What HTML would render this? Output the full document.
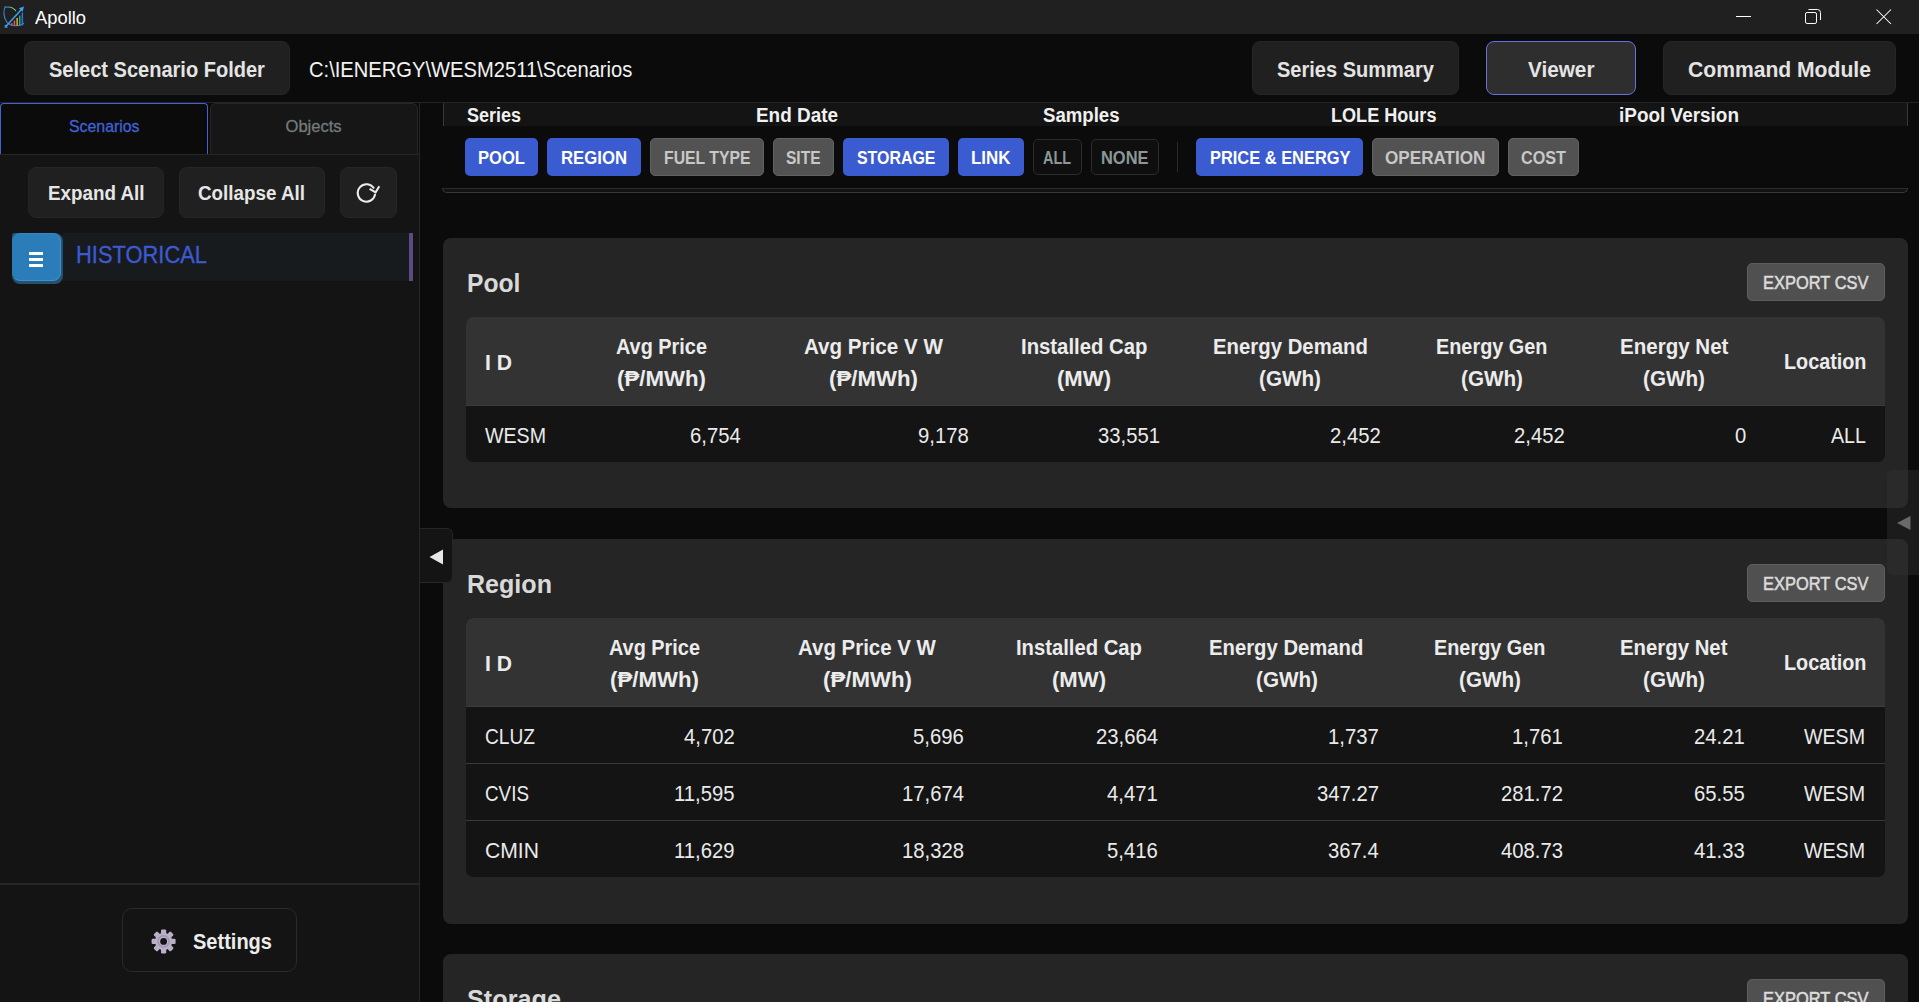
<!DOCTYPE html>
<html><head><meta charset="utf-8"><title>Apollo</title>
<style>
html,body{margin:0;padding:0;width:1919px;height:1002px;overflow:hidden;background:#0b0b0b;}
body{position:relative;font-family:"Liberation Sans",sans-serif;}
.a{position:absolute;box-sizing:border-box;}
.t{position:absolute;white-space:nowrap;transform-origin:0 0;}
svg{position:absolute;}
</style></head><body>
<div class="a" style="left:0px;top:0px;width:1919px;height:34px;background:#202020;"></div>
<svg style="left:0;top:0" width="30" height="34" viewBox="0 0 30 34">
<defs><linearGradient id="tg" x1="0" y1="0" x2="1" y2="0"><stop offset="0" stop-color="#3b8fd8"/><stop offset="1" stop-color="#7cd27a"/></linearGradient></defs>
<path d="M5.4 6.3 C3.2 10 3.4 17 6.5 21.5 C8.5 24.5 12 25.8 16 25.8 C19.5 25.8 22.5 24.8 24 23.2" fill="none" stroke="#3a8ad0" stroke-width="1.1"/>
<path d="M5.4 7.2 C9 6.6 13.5 7.5 16 11" fill="none" stroke="url(#tg)" stroke-width="1.1"/>
<rect x="11.2" y="23" width="1.4" height="2.6" fill="#e0458f"/>
<rect x="13.7" y="20.6" width="1.5" height="5" fill="#e8564a"/>
<rect x="16.4" y="18" width="1.5" height="7.6" fill="#f0a23c"/>
<rect x="19" y="15.6" width="1.5" height="10" fill="#1fae8c"/>
<rect x="21.6" y="12.5" width="1.5" height="13" fill="#2a78e0"/>
<path d="M5.6 26.8 L22.8 8" stroke="#3ea0f0" stroke-width="1.5"/>
<path d="M24 6.6 L18.8 8.2 L22.6 11.8 Z" fill="#3ea0f0"/>
<path d="M4.6 27.8 L5 24.6 L8 27.4 Z" fill="#3ea0f0"/>
</svg>
<div class="t" style="left:35.00px;top:9.00px;font-size:18.90px;line-height:18.90px;font-weight:400;color:#ffffff;transform:scaleX(0.9715);">Apollo</div>
<svg style="left:1730px;top:0" width="189" height="34" viewBox="0 0 189 34">
<path d="M6 16.5 H21" stroke="#fff" stroke-width="1"/>
<rect x="75.5" y="12.5" width="11" height="11" rx="1.6" fill="none" stroke="#fff" stroke-width="1"/>
<path d="M78.5 9.5 H87.5 Q90.5 9.5 90.5 12.5 V20" fill="none" stroke="#fff" stroke-width="1"/>
<path d="M146.5 9.5 L161 24 M161 9.5 L146.5 24" stroke="#fff" stroke-width="1.05"/>
</svg>
<div class="a" style="left:0px;top:34px;width:1919px;height:68px;background:#0b0b0b;"></div>
<div class="a" style="left:0px;top:102px;width:1919px;height:1px;background:#242424;"></div>
<div class="a" style="left:24px;top:41px;width:266px;height:54px;background:#202020;border:1px solid #262626;box-sizing:border-box;border-radius:8px;"></div>
<div class="t" style="left:49.00px;top:59.00px;font-size:22.53px;line-height:22.53px;font-weight:700;color:#e4e4e4;transform:scaleX(0.8893);">Select Scenario Folder</div>
<div class="t" style="left:308.50px;top:59.00px;font-size:22.53px;line-height:22.53px;font-weight:400;color:#f2f2f2;transform:scaleX(0.8951);">C:\IENERGY\WESM2511\Scenarios</div>
<div class="a" style="left:1252px;top:41px;width:207px;height:54px;background:#202020;border:1px solid #262626;box-sizing:border-box;border-radius:8px;"></div>
<div class="t" style="left:1277.00px;top:59.00px;font-size:22.53px;line-height:22.53px;font-weight:700;color:#e4e4e4;transform:scaleX(0.8890);">Series Summary</div>
<div class="a" style="left:1486px;top:41px;width:150px;height:54px;background:#2e2e2e;border:1.5px solid #6b6fe0;box-sizing:border-box;border-radius:8px;"></div>
<div class="t" style="left:1528.00px;top:59.00px;font-size:22.53px;line-height:22.53px;font-weight:700;color:#e4e4e4;transform:scaleX(0.9208);">Viewer</div>
<div class="a" style="left:1663px;top:41px;width:233px;height:54px;background:#202020;border:1px solid #262626;box-sizing:border-box;border-radius:8px;"></div>
<div class="t" style="left:1688.00px;top:59.00px;font-size:22.53px;line-height:22.53px;font-weight:700;color:#e4e4e4;transform:scaleX(0.9373);">Command Module</div>
<div class="a" style="left:0px;top:103px;width:419px;height:899px;background:#141414;"></div>
<div class="a" style="left:419px;top:103px;width:1px;height:899px;background:#262626;"></div>
<div class="a" style="left:0px;top:103px;width:419px;height:52px;background:#0b0b0b;"></div>
<div class="a" style="left:0px;top:103px;width:208px;height:52px;background:#0b0b0b;border:1px solid #4262d6;box-sizing:border-box;border-radius:4px 4px 0 0;border-bottom:none;"></div>
<div class="a" style="left:210px;top:103px;width:208px;height:52px;background:#161616;border:1px solid #262626;box-sizing:border-box;border-radius:6px 6px 0 0;border-bottom:none;"></div>
<div class="a" style="left:0px;top:154px;width:419px;height:1px;background:#262626;"></div>
<div class="t" style="left:69.00px;top:119.00px;font-size:16.57px;line-height:16.57px;font-weight:400;color:#4262d8;transform:scaleX(0.9571);-webkit-text-stroke:0.3px #4262d8;">Scenarios</div>
<div class="t" style="left:285.50px;top:119.00px;font-size:16.57px;line-height:16.57px;font-weight:400;color:#737b7c;-webkit-text-stroke:0.3px #737b7c;">Objects</div>
<div class="a" style="left:28px;top:167px;width:136px;height:51px;background:#202020;border:1px solid #262626;box-sizing:border-box;border-radius:8px;"></div>
<div class="t" style="left:48.00px;top:183.00px;font-size:20.35px;line-height:20.35px;font-weight:700;color:#e6e6e6;transform:scaleX(0.9241);">Expand All</div>
<div class="a" style="left:179px;top:167px;width:146px;height:51px;background:#202020;border:1px solid #262626;box-sizing:border-box;border-radius:8px;"></div>
<div class="t" style="left:198.00px;top:183.00px;font-size:20.35px;line-height:20.35px;font-weight:700;color:#e6e6e6;transform:scaleX(0.9246);">Collapse All</div>
<div class="a" style="left:340px;top:167px;width:57px;height:51px;background:#202020;border:1px solid #262626;box-sizing:border-box;border-radius:8px;"></div>
<svg style="left:350px;top:178px" width="36" height="32" viewBox="0 0 36 32">
<path d="M25.1 15.9 A8.7 8.7 0 1 1 24 10.6" fill="none" stroke="#ececec" stroke-width="2.1"/>
<path d="M19.6 10.9 L25.6 14.3 L29.3 8.3" fill="none" stroke="#ececec" stroke-width="2.1" stroke-linejoin="miter" stroke-linecap="butt"/>
</svg>
<div class="a" style="left:62px;top:233px;width:347px;height:48px;background:#171b1e;"></div>
<div class="a" style="left:409px;top:233px;width:4px;height:48px;background:#5c4b80;"></div>
<div class="a" style="left:12px;top:233px;width:51px;height:51px;background:#26506c;border-radius:2px 8px 8px 8px;"></div>
<div class="a" style="left:12px;top:233px;width:49px;height:48px;background:#2a7db8;border:1px solid #3594d6;box-sizing:border-box;border-radius:8px;border-left-color:#2a7db8;border-top-color:#2f88c8;"></div>
<div class="a" style="left:29px;top:252px;width:14px;height:3px;background:#ffffff;"></div>
<div class="a" style="left:29px;top:258px;width:14px;height:3px;background:#ffffff;"></div>
<div class="a" style="left:29px;top:264px;width:14px;height:3px;background:#ffffff;"></div>
<div class="t" style="left:76.00px;top:243.00px;font-size:24.71px;line-height:24.71px;font-weight:400;color:#3d5ad2;transform:scaleX(0.8862);-webkit-text-stroke:0.35px #3d5ad2;">HISTORICAL</div>
<div class="a" style="left:0px;top:883px;width:419px;height:2px;background:#262626;"></div>
<div class="a" style="left:122px;top:908px;width:175px;height:64px;background:#141414;border:1px solid #2a2a2a;box-sizing:border-box;border-radius:10px;"></div>
<svg style="left:150px;top:928px" width="27" height="27" viewBox="0 0 27 27">
<g transform="translate(13.6 13.4)" fill="#b9b0c7">
<circle r="8.6"/>
<g id="tooth"><rect x="-2.6" y="-12" width="5.2" height="5" rx="1.2"/></g>
<rect x="-2.6" y="-12" width="5.2" height="5" rx="1.2" transform="rotate(45)"/>
<rect x="-2.6" y="-12" width="5.2" height="5" rx="1.2" transform="rotate(90)"/>
<rect x="-2.6" y="-12" width="5.2" height="5" rx="1.2" transform="rotate(135)"/>
<rect x="-2.6" y="-12" width="5.2" height="5" rx="1.2" transform="rotate(180)"/>
<rect x="-2.6" y="-12" width="5.2" height="5" rx="1.2" transform="rotate(225)"/>
<rect x="-2.6" y="-12" width="5.2" height="5" rx="1.2" transform="rotate(270)"/>
<rect x="-2.6" y="-12" width="5.2" height="5" rx="1.2" transform="rotate(315)"/>
<circle r="6.3" fill="#a294b3"/>
<circle r="4.8" fill="#b9afc7"/>
<circle r="3.4" fill="#141414"/>
</g></svg>
<div class="t" style="left:193.00px;top:931.00px;font-size:22.53px;line-height:22.53px;font-weight:700;color:#ececec;transform:scaleX(0.8890);">Settings</div>
<div class="a" style="left:443px;top:103px;width:1465px;height:23px;background:#141414;"></div>
<div class="a" style="left:443px;top:103px;width:1px;height:23px;background:#383838;"></div>
<div class="a" style="left:1907px;top:103px;width:1px;height:23px;background:#383838;"></div>
<div class="a" style="left:442px;top:188px;width:1466px;height:5px;background:#121212;border:1px solid #383838;box-sizing:border-box;border-radius:0 0 5px 5px;border-top-color:#2c2c2c;"></div>
<div class="t" style="left:466.50px;top:105.00px;font-size:20.35px;line-height:20.35px;font-weight:700;color:#f0f0f0;transform:scaleX(0.8837);">Series</div>
<div class="t" style="left:755.50px;top:105.00px;font-size:20.35px;line-height:20.35px;font-weight:700;color:#f0f0f0;transform:scaleX(0.9297);">End Date</div>
<div class="t" style="left:1043.00px;top:105.00px;font-size:20.35px;line-height:20.35px;font-weight:700;color:#f0f0f0;transform:scaleX(0.9139);">Samples</div>
<div class="t" style="left:1331.00px;top:105.00px;font-size:20.35px;line-height:20.35px;font-weight:700;color:#f0f0f0;transform:scaleX(0.8886);">LOLE Hours</div>
<div class="t" style="left:1619.00px;top:105.00px;font-size:20.35px;line-height:20.35px;font-weight:700;color:#f0f0f0;transform:scaleX(0.9310);">iPool Version</div>
<div class="a" style="left:465px;top:138px;width:73px;height:38px;background:#3b5bd0;border-radius:5px;"></div>
<div class="t" style="left:478.00px;top:149.00px;font-size:18.90px;line-height:18.90px;font-weight:700;color:#ffffff;transform:scaleX(0.8776);">POOL</div>
<div class="a" style="left:547px;top:138px;width:94px;height:38px;background:#3b5bd0;border-radius:5px;"></div>
<div class="t" style="left:561.00px;top:149.00px;font-size:18.90px;line-height:18.90px;font-weight:700;color:#ffffff;transform:scaleX(0.8857);">REGION</div>
<div class="a" style="left:650px;top:138px;width:114px;height:38px;background:#525252;border:1px solid #626262;box-sizing:border-box;border-radius:5px;"></div>
<div class="t" style="left:663.50px;top:149.00px;font-size:18.90px;line-height:18.90px;font-weight:700;color:#c8c8c8;transform:scaleX(0.8348);">FUEL TYPE</div>
<div class="a" style="left:773px;top:138px;width:61px;height:38px;background:#525252;border:1px solid #626262;box-sizing:border-box;border-radius:5px;"></div>
<div class="t" style="left:786.00px;top:149.00px;font-size:18.90px;line-height:18.90px;font-weight:700;color:#c8c8c8;transform:scaleX(0.8218);">SITE</div>
<div class="a" style="left:843px;top:138px;width:106px;height:38px;background:#3b5bd0;border-radius:5px;"></div>
<div class="t" style="left:857.00px;top:149.00px;font-size:18.90px;line-height:18.90px;font-weight:700;color:#ffffff;transform:scaleX(0.8432);">STORAGE</div>
<div class="a" style="left:958px;top:138px;width:66px;height:38px;background:#3b5bd0;border-radius:5px;"></div>
<div class="t" style="left:971.00px;top:149.00px;font-size:18.90px;line-height:18.90px;font-weight:700;color:#ffffff;transform:scaleX(0.8955);">LINK</div>
<div class="a" style="left:1033px;top:139px;width:49px;height:36px;background:#0f0f0f;border:1px solid #2c2c2c;box-sizing:border-box;border-radius:5px;"></div>
<div class="t" style="left:1043.00px;top:149.00px;font-size:18.90px;line-height:18.90px;font-weight:700;color:#8c9898;transform:scaleX(0.7624);">ALL</div>
<div class="a" style="left:1091px;top:139px;width:68px;height:36px;background:#0f0f0f;border:1px solid #2c2c2c;box-sizing:border-box;border-radius:5px;"></div>
<div class="t" style="left:1101.00px;top:149.00px;font-size:18.90px;line-height:18.90px;font-weight:700;color:#8c9898;transform:scaleX(0.8696);">NONE</div>
<div class="a" style="left:1177px;top:142px;width:1px;height:30px;background:#2a2a2a;"></div>
<div class="a" style="left:1196px;top:138px;width:167px;height:38px;background:#3b5bd0;border-radius:5px;"></div>
<div class="t" style="left:1209.50px;top:149.00px;font-size:18.90px;line-height:18.90px;font-weight:700;color:#ffffff;transform:scaleX(0.8690);">PRICE &amp; ENERGY</div>
<div class="a" style="left:1372px;top:138px;width:127px;height:38px;background:#525252;border:1px solid #626262;box-sizing:border-box;border-radius:5px;"></div>
<div class="t" style="left:1385.00px;top:149.00px;font-size:18.90px;line-height:18.90px;font-weight:700;color:#c8c8c8;transform:scaleX(0.9060);">OPERATION</div>
<div class="a" style="left:1508px;top:138px;width:71px;height:38px;background:#525252;border:1px solid #626262;box-sizing:border-box;border-radius:5px;"></div>
<div class="t" style="left:1521.00px;top:149.00px;font-size:18.90px;line-height:18.90px;font-weight:700;color:#c8c8c8;transform:scaleX(0.8572);">COST</div>
<div class="a" style="left:443px;top:238px;width:1465px;height:270px;background:#252525;border-radius:8px;"></div>
<div class="t" style="left:467.00px;top:270.00px;font-size:26.16px;line-height:26.16px;font-weight:700;color:#d9d9d9;transform:scaleX(0.9436);">Pool</div>
<div class="a" style="left:1747px;top:263px;width:138px;height:38px;background:#505050;border:1px solid #5e5e5e;box-sizing:border-box;border-radius:5px;"></div>
<div class="t" style="left:1763.00px;top:274.00px;font-size:18.90px;line-height:18.90px;font-weight:400;color:#dcdcdc;transform:scaleX(0.8710);-webkit-text-stroke:0.55px #dcdcdc;">EXPORT CSV</div>
<div class="a" style="left:466px;top:317px;width:1419px;height:145px;background:#141414;border-radius:7px;overflow:hidden;"></div>
<div class="a" style="left:466px;top:317px;width:1419px;height:88px;background:#333333;border-radius:7px 7px 0 0;"></div>
<div class="a" style="left:466px;top:405px;width:1419px;height:1px;background:#3c3c3c;"></div>
<div class="t" style="left:485.00px;top:352.00px;font-size:21.80px;line-height:21.80px;font-weight:700;color:#ececec;transform:scaleX(0.9691);">I D</div>
<div class="t" style="left:616.00px;top:336.00px;font-size:22.53px;line-height:22.53px;font-weight:700;color:#ececec;transform:scaleX(0.8829);">Avg Price</div>
<div class="t" style="left:617.00px;top:368.00px;font-size:22.53px;line-height:22.53px;font-weight:700;color:#ececec;transform:scaleX(0.9876);">(₱/MWh)</div>
<div class="t" style="left:803.50px;top:336.00px;font-size:22.53px;line-height:22.53px;font-weight:700;color:#ececec;transform:scaleX(0.9148);">Avg Price V W</div>
<div class="t" style="left:828.50px;top:368.00px;font-size:22.53px;line-height:22.53px;font-weight:700;color:#ececec;transform:scaleX(0.9876);">(₱/MWh)</div>
<div class="t" style="left:1020.75px;top:336.00px;font-size:22.53px;line-height:22.53px;font-weight:700;color:#ececec;transform:scaleX(0.9020);">Installed Cap</div>
<div class="t" style="left:1056.50px;top:368.00px;font-size:22.53px;line-height:22.53px;font-weight:700;color:#ececec;transform:scaleX(0.9817);">(MW)</div>
<div class="t" style="left:1212.50px;top:336.00px;font-size:22.53px;line-height:22.53px;font-weight:700;color:#ececec;transform:scaleX(0.9036);">Energy Demand</div>
<div class="t" style="left:1259.00px;top:368.00px;font-size:22.53px;line-height:22.53px;font-weight:700;color:#ececec;transform:scaleX(0.9182);">(GWh)</div>
<div class="t" style="left:1435.95px;top:336.00px;font-size:22.53px;line-height:22.53px;font-weight:700;color:#ececec;transform:scaleX(0.8816);">Energy Gen</div>
<div class="t" style="left:1460.50px;top:368.00px;font-size:22.53px;line-height:22.53px;font-weight:700;color:#ececec;transform:scaleX(0.9182);">(GWh)</div>
<div class="t" style="left:1619.75px;top:336.00px;font-size:22.53px;line-height:22.53px;font-weight:700;color:#ececec;transform:scaleX(0.9120);">Energy Net</div>
<div class="t" style="left:1643.00px;top:368.00px;font-size:22.53px;line-height:22.53px;font-weight:700;color:#ececec;transform:scaleX(0.9182);">(GWh)</div>
<div class="t" style="left:1784.00px;top:351.00px;font-size:22.53px;line-height:22.53px;font-weight:700;color:#ececec;transform:scaleX(0.8789);">Location</div>
<div class="t" style="left:484.50px;top:425.00px;font-size:21.80px;line-height:21.80px;font-weight:400;color:#eaeaea;transform:scaleX(0.8991);">WESM</div>
<div class="t" style="left:689.78px;top:425.00px;font-size:21.80px;line-height:21.80px;font-weight:400;color:#eaeaea;transform:scaleX(0.9300);">6,754</div>
<div class="t" style="left:917.98px;top:425.00px;font-size:21.80px;line-height:21.80px;font-weight:400;color:#eaeaea;transform:scaleX(0.9300);">9,178</div>
<div class="t" style="left:1098.31px;top:425.00px;font-size:21.80px;line-height:21.80px;font-weight:400;color:#eaeaea;transform:scaleX(0.9300);">33,551</div>
<div class="t" style="left:1330.28px;top:425.00px;font-size:21.80px;line-height:21.80px;font-weight:400;color:#eaeaea;transform:scaleX(0.9300);">2,452</div>
<div class="t" style="left:1514.28px;top:425.00px;font-size:21.80px;line-height:21.80px;font-weight:400;color:#eaeaea;transform:scaleX(0.9300);">2,452</div>
<div class="t" style="left:1734.73px;top:425.00px;font-size:21.80px;line-height:21.80px;font-weight:400;color:#eaeaea;transform:scaleX(0.9300);">0</div>
<div class="t" style="left:1831.39px;top:425.00px;font-size:21.80px;line-height:21.80px;font-weight:400;color:#eaeaea;transform:scaleX(0.9000);">ALL</div>
<div class="a" style="left:443px;top:539px;width:1465px;height:385px;background:#252525;border-radius:8px;"></div>
<div class="t" style="left:467.00px;top:571.00px;font-size:26.16px;line-height:26.16px;font-weight:700;color:#d9d9d9;transform:scaleX(0.9587);">Region</div>
<div class="a" style="left:1747px;top:564px;width:138px;height:38px;background:#505050;border:1px solid #5e5e5e;box-sizing:border-box;border-radius:5px;"></div>
<div class="t" style="left:1763.00px;top:575.00px;font-size:18.90px;line-height:18.90px;font-weight:400;color:#dcdcdc;transform:scaleX(0.8710);-webkit-text-stroke:0.55px #dcdcdc;">EXPORT CSV</div>
<div class="a" style="left:466px;top:618px;width:1419px;height:259px;background:#141414;border-radius:7px;overflow:hidden;"></div>
<div class="a" style="left:466px;top:618px;width:1419px;height:88px;background:#333333;border-radius:7px 7px 0 0;"></div>
<div class="a" style="left:466px;top:706px;width:1419px;height:1px;background:#3c3c3c;"></div>
<div class="a" style="left:466px;top:763px;width:1419px;height:1px;background:#3a3a3a;"></div>
<div class="a" style="left:466px;top:820px;width:1419px;height:1px;background:#3a3a3a;"></div>
<div class="t" style="left:485.00px;top:653.00px;font-size:21.80px;line-height:21.80px;font-weight:700;color:#ececec;transform:scaleX(0.9691);">I D</div>
<div class="t" style="left:609.20px;top:637.00px;font-size:22.53px;line-height:22.53px;font-weight:700;color:#ececec;transform:scaleX(0.8829);">Avg Price</div>
<div class="t" style="left:610.00px;top:669.00px;font-size:22.53px;line-height:22.53px;font-weight:700;color:#ececec;transform:scaleX(0.9876);">(₱/MWh)</div>
<div class="t" style="left:798.00px;top:637.00px;font-size:22.53px;line-height:22.53px;font-weight:700;color:#ececec;transform:scaleX(0.9082);">Avg Price V W</div>
<div class="t" style="left:822.50px;top:669.00px;font-size:22.53px;line-height:22.53px;font-weight:700;color:#ececec;transform:scaleX(0.9876);">(₱/MWh)</div>
<div class="t" style="left:1016.00px;top:637.00px;font-size:22.53px;line-height:22.53px;font-weight:700;color:#ececec;transform:scaleX(0.8984);">Installed Cap</div>
<div class="t" style="left:1052.00px;top:669.00px;font-size:22.53px;line-height:22.53px;font-weight:700;color:#ececec;transform:scaleX(0.9817);">(MW)</div>
<div class="t" style="left:1209.45px;top:637.00px;font-size:22.53px;line-height:22.53px;font-weight:700;color:#ececec;transform:scaleX(0.9007);">Energy Demand</div>
<div class="t" style="left:1256.00px;top:669.00px;font-size:22.53px;line-height:22.53px;font-weight:700;color:#ececec;transform:scaleX(0.9182);">(GWh)</div>
<div class="t" style="left:1434.25px;top:637.00px;font-size:22.53px;line-height:22.53px;font-weight:700;color:#ececec;transform:scaleX(0.8816);">Energy Gen</div>
<div class="t" style="left:1459.00px;top:669.00px;font-size:22.53px;line-height:22.53px;font-weight:700;color:#ececec;transform:scaleX(0.9182);">(GWh)</div>
<div class="t" style="left:1619.95px;top:637.00px;font-size:22.53px;line-height:22.53px;font-weight:700;color:#ececec;transform:scaleX(0.9036);">Energy Net</div>
<div class="t" style="left:1642.70px;top:669.00px;font-size:22.53px;line-height:22.53px;font-weight:700;color:#ececec;transform:scaleX(0.9182);">(GWh)</div>
<div class="t" style="left:1784.00px;top:652.00px;font-size:22.53px;line-height:22.53px;font-weight:700;color:#ececec;transform:scaleX(0.8789);">Location</div>
<div class="t" style="left:484.50px;top:726.00px;font-size:21.80px;line-height:21.80px;font-weight:400;color:#eaeaea;transform:scaleX(0.8786);">CLUZ</div>
<div class="t" style="left:484.50px;top:783.00px;font-size:21.80px;line-height:21.80px;font-weight:400;color:#eaeaea;transform:scaleX(0.8642);">CVIS</div>
<div class="t" style="left:484.50px;top:840.00px;font-size:21.80px;line-height:21.80px;font-weight:400;color:#eaeaea;transform:scaleX(0.9691);">CMIN</div>
<div class="t" style="left:683.78px;top:726.00px;font-size:21.80px;line-height:21.80px;font-weight:400;color:#eaeaea;transform:scaleX(0.9300);">4,702</div>
<div class="t" style="left:912.78px;top:726.00px;font-size:21.80px;line-height:21.80px;font-weight:400;color:#eaeaea;transform:scaleX(0.9300);">5,696</div>
<div class="t" style="left:1095.81px;top:726.00px;font-size:21.80px;line-height:21.80px;font-weight:400;color:#eaeaea;transform:scaleX(0.9300);">23,664</div>
<div class="t" style="left:1328.08px;top:726.00px;font-size:21.80px;line-height:21.80px;font-weight:400;color:#eaeaea;transform:scaleX(0.9300);">1,737</div>
<div class="t" style="left:1512.28px;top:726.00px;font-size:21.80px;line-height:21.80px;font-weight:400;color:#eaeaea;transform:scaleX(0.9300);">1,761</div>
<div class="t" style="left:1694.28px;top:726.00px;font-size:21.80px;line-height:21.80px;font-weight:400;color:#eaeaea;transform:scaleX(0.9300);">24.21</div>
<div class="t" style="left:1804.44px;top:726.00px;font-size:21.80px;line-height:21.80px;font-weight:400;color:#eaeaea;transform:scaleX(0.9000);">WESM</div>
<div class="t" style="left:673.96px;top:783.00px;font-size:21.80px;line-height:21.80px;font-weight:400;color:#eaeaea;transform:scaleX(0.9300);">11,595</div>
<div class="t" style="left:901.51px;top:783.00px;font-size:21.80px;line-height:21.80px;font-weight:400;color:#eaeaea;transform:scaleX(0.9300);">17,674</div>
<div class="t" style="left:1107.08px;top:783.00px;font-size:21.80px;line-height:21.80px;font-weight:400;color:#eaeaea;transform:scaleX(0.9300);">4,471</div>
<div class="t" style="left:1316.81px;top:783.00px;font-size:21.80px;line-height:21.80px;font-weight:400;color:#eaeaea;transform:scaleX(0.9300);">347.27</div>
<div class="t" style="left:1501.01px;top:783.00px;font-size:21.80px;line-height:21.80px;font-weight:400;color:#eaeaea;transform:scaleX(0.9300);">281.72</div>
<div class="t" style="left:1694.28px;top:783.00px;font-size:21.80px;line-height:21.80px;font-weight:400;color:#eaeaea;transform:scaleX(0.9300);">65.55</div>
<div class="t" style="left:1804.44px;top:783.00px;font-size:21.80px;line-height:21.80px;font-weight:400;color:#eaeaea;transform:scaleX(0.9000);">WESM</div>
<div class="t" style="left:673.96px;top:840.00px;font-size:21.80px;line-height:21.80px;font-weight:400;color:#eaeaea;transform:scaleX(0.9300);">11,629</div>
<div class="t" style="left:901.51px;top:840.00px;font-size:21.80px;line-height:21.80px;font-weight:400;color:#eaeaea;transform:scaleX(0.9300);">18,328</div>
<div class="t" style="left:1107.08px;top:840.00px;font-size:21.80px;line-height:21.80px;font-weight:400;color:#eaeaea;transform:scaleX(0.9300);">5,416</div>
<div class="t" style="left:1328.08px;top:840.00px;font-size:21.80px;line-height:21.80px;font-weight:400;color:#eaeaea;transform:scaleX(0.9300);">367.4</div>
<div class="t" style="left:1501.01px;top:840.00px;font-size:21.80px;line-height:21.80px;font-weight:400;color:#eaeaea;transform:scaleX(0.9300);">408.73</div>
<div class="t" style="left:1694.28px;top:840.00px;font-size:21.80px;line-height:21.80px;font-weight:400;color:#eaeaea;transform:scaleX(0.9300);">41.33</div>
<div class="t" style="left:1804.44px;top:840.00px;font-size:21.80px;line-height:21.80px;font-weight:400;color:#eaeaea;transform:scaleX(0.9000);">WESM</div>
<div class="a" style="left:443px;top:954px;width:1465px;height:146px;background:#252525;border-radius:8px;"></div>
<div class="t" style="left:467.00px;top:986.00px;font-size:26.16px;line-height:26.16px;font-weight:700;color:#d9d9d9;transform:scaleX(0.9650);">Storage</div>
<div class="a" style="left:1747px;top:979px;width:138px;height:38px;background:#505050;border:1px solid #5e5e5e;box-sizing:border-box;border-radius:5px;"></div>
<div class="t" style="left:1763.00px;top:990.00px;font-size:18.90px;line-height:18.90px;font-weight:400;color:#dcdcdc;transform:scaleX(0.8710);-webkit-text-stroke:0.55px #dcdcdc;">EXPORT CSV</div>
<div class="a" style="left:420px;top:528px;width:33px;height:55px;background:#141414;border:1px solid #262626;box-sizing:border-box;border-radius:0 6px 6px 0;border-left:none;"></div>
<svg style="left:429px;top:549px" width="15" height="16" viewBox="0 0 15 16"><path d="M0.5 8 L14 0.5 L14 15.5 Z" fill="#e8e8e8"/></svg>
<div class="a" style="left:1887px;top:470px;width:32px;height:105px;background:rgba(49,49,49,0.42);border-radius:6px 0 0 6px;"></div>
<svg style="left:1896px;top:515px" width="16" height="16" viewBox="0 0 16 16"><path d="M1 8 L14.5 1 L14.5 15 Z" fill="#6a6a6a"/></svg>
</body></html>
